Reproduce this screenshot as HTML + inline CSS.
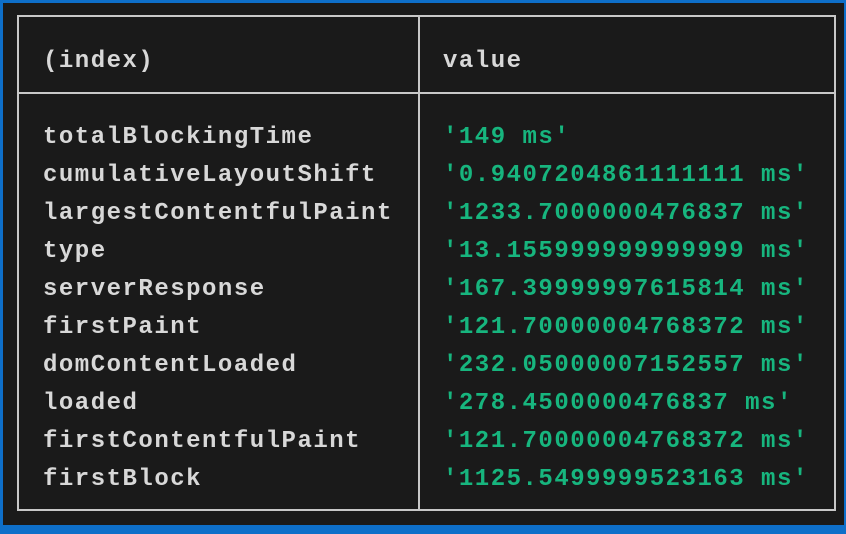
<!DOCTYPE html>
<html><head><style>
html,body{margin:0;padding:0}
body{width:846px;height:534px;background:#1a1a1a;position:relative;overflow:hidden;font-family:"Liberation Mono",monospace;}
.blue{position:absolute;background:#0e6fc9}
.t{position:absolute;left:17px;top:15px;width:815px;height:492px;border:2px solid #c8c8c8;}
.hl{position:absolute;left:0;right:0;top:75px;height:2px;background:#c8c8c8}
.vl{position:absolute;top:0;bottom:0;left:399px;width:2px;background:#c8c8c8}
.c{position:absolute;font-size:24px;letter-spacing:1.5px;line-height:38px;white-space:pre;color:#d8d8d8;font-weight:bold}
.g{color:#17b57e;font-weight:bold}
</style></head><body>
<div class="blue" style="left:0;top:0;width:846px;height:3px"></div>
<div class="blue" style="left:0;top:0;width:3px;height:534px"></div>
<div class="blue" style="left:0;top:525px;width:846px;height:9px"></div>
<div class="blue" style="left:844px;top:0;width:2px;height:534px"></div>
<div class="t"><div class="hl"></div><div class="vl"></div>
<div class="c" style="left:24px;top:26px">(index)</div>
<div class="c" style="left:424px;top:26px">value</div>
<div class="c" style="left:24px;top:102px">totalBlockingTime
cumulativeLayoutShift
largestContentfulPaint
type
serverResponse
firstPaint
domContentLoaded
loaded
firstContentfulPaint
firstBlock</div>
<div class="c g" style="left:424px;top:102px">'149 ms'
'0.9407204861111111 ms'
'1233.7000000476837 ms'
'13.155999999999999 ms'
'167.39999997615814 ms'
'121.70000004768372 ms'
'232.05000007152557 ms'
'278.4500000476837 ms'
'121.70000004768372 ms'
'1125.5499999523163 ms'</div>
</div>
</body></html>
